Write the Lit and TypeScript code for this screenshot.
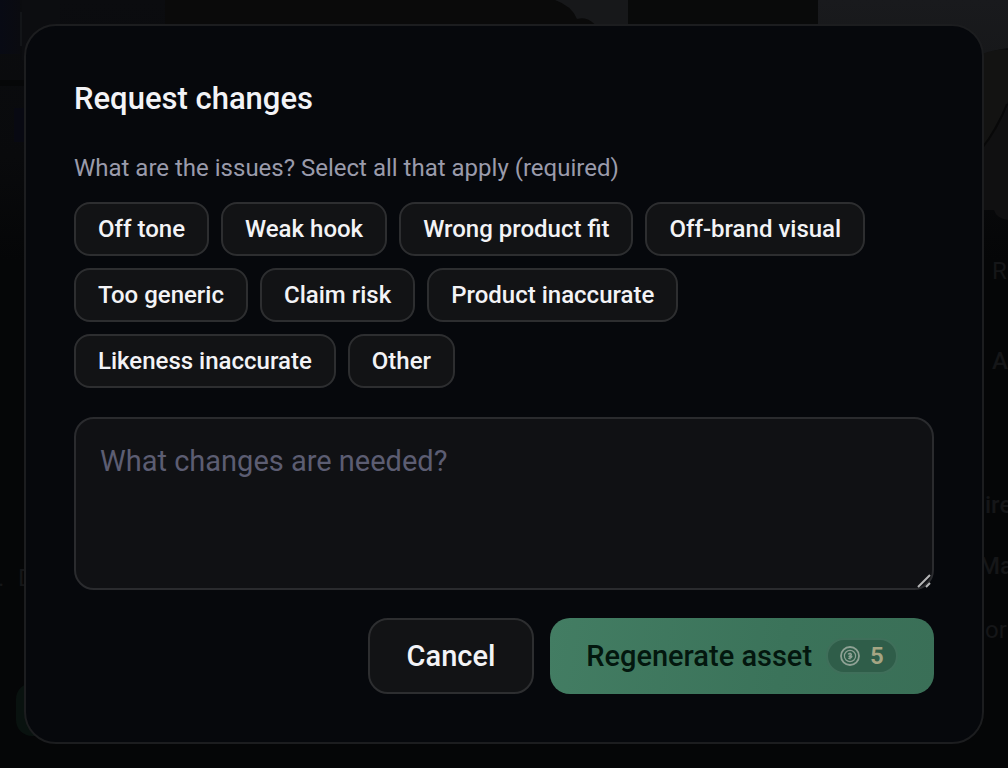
import { LitElement, html, css } from "lit";
import { customElement, state } from "lit/decorators.js";

const ISSUES = [
  "Off tone",
  "Weak hook",
  "Wrong product fit",
  "Off-brand visual",
  "Too generic",
  "Claim risk",
  "Product inaccurate",
  "Likeness inaccurate",
  "Other",
];

/** Dimmed page that shows around the edges of the dialog. */
@customElement("page-backdrop")
export class PageBackdrop extends LitElement {
  static styles = css`
    :host {
      display: block;
      background: #050607;
    }
    svg {
      display: block;
      width: 100%;
      height: 100%;
      font-family: Roboto, "Liberation Sans", sans-serif;
    }
  `;

  render() {
    return html`
      <svg viewBox="0 0 1008 768" preserveAspectRatio="xMidYMid slice" aria-hidden="true">
        <defs>
          <linearGradient id="left" x1="0" y1="0" x2="0" y2="1">
            <stop offset="0" stop-color="#0b0c0f" />
            <stop offset="0.6" stop-color="#090a0c" />
            <stop offset="1" stop-color="#050607" />
          </linearGradient>
          <linearGradient id="blue" x1="0" y1="0" x2="1" y2="0">
            <stop offset="0" stop-color="#080a14" />
            <stop offset="1" stop-color="#0a0b10" />
          </linearGradient>
          <linearGradient id="photo" x1="0" y1="0" x2="0" y2="1">
            <stop offset="0" stop-color="#191a1d" />
            <stop offset="1" stop-color="#17181a" />
          </linearGradient>
        </defs>
        <rect width="1008" height="260" fill="url(#left)" />
        <rect width="20" height="54" fill="url(#blue)" />
        <rect x="20" y="12" width="2" height="34" fill="#131518" />
        <rect x="22" width="38" height="60" fill="#0c0d10" />
        <rect y="80" width="30" height="6" fill="#060708" />
        <rect x="14" y="108" width="12" height="34" fill="#080912" />
        <rect x="165" width="463" height="60" fill="#0a0a0a" />
        <path d="M555 0H628V40H606Q592 14 577 19Q572 6 555 0Z" fill="#17181a" />
        <path d="M628 0h190v40H628z" fill="#090a0a" />
        <path d="M818 0h190v48q-16 2-26 8H818z" fill="url(#photo)" />
        <path d="M982 54q16-6 26-4v52q-14 28-26 46z" fill="#131312" />
        <path d="M982 148q14-18 26-44v116q-12-2-14-10h-12z" fill="#101011" />
        <path d="M1007 104q-10 26-25 44" fill="none" stroke="#080808" stroke-width="2" />
        <g fill="#151618" font-size="24">
          <text x="992" y="279">R</text>
          <text x="992" y="369" font-weight="500">A</text>
          <text x="985" y="513" font-weight="500">ire</text>
          <text x="979" y="574" font-weight="500">Ma</text>
          <text x="985" y="638">or</text>
          <text x="-2" y="586">.</text>
          <text x="18" y="586">D</text>
        </g>
        <rect x="16" y="683" width="120" height="53" rx="16" fill="#09120f" />
      </svg>
    `;
  }
}

@customElement("credit-badge")
export class CreditBadge extends LitElement {
  static properties = { amount: { type: Number } };
  declare amount: number;

  static styles = css`
    :host {
      display: inline-flex;
      align-items: center;
      gap: 10px;
      box-sizing: border-box;
      height: 36px;
      padding: 0 12px;
      border: 2px solid #3f6f5a;
      border-radius: 18px;
      background: #2f5d49;
      color: #a5a583;
      font-size: 24px;
      font-weight: 600;
      line-height: 32px;
    }
    svg {
      display: block;
      width: 20px;
      height: 20px;
    }
  `;

  render() {
    return html`
      <svg viewBox="0 0 20 20" fill="none" stroke="#8fa295" aria-hidden="true">
        <circle cx="10" cy="10" r="9" stroke-width="1.8" />
        <circle cx="10" cy="10" r="5.6" stroke-width="1.2" />
        <path
          d="M8 8.4Q9 7 10.8 7.5Q12.2 8.4 10.8 9.6L8.6 10.4H12Q11.6 12.6 8.2 12.4M10 6.4V13.4"
          stroke-width="1.1"
        />
      </svg>
      <span>${this.amount}</span>
    `;
  }
}

@customElement("app-root")
export class AppRoot extends LitElement {
  @state() private selected = new Set<string>();

  static styles = css`
    :host {
      display: grid;
      box-sizing: border-box;
      min-height: 100vh;
      padding: 24px;
      position: relative;
      align-items: center;
      font-family: Roboto, "Liberation Sans", sans-serif;
      color: #f3f3f6;
    }
    page-backdrop {
      position: absolute;
      inset: 0;
    }
    .dialog {
      position: relative;
      box-sizing: border-box;
      width: 100%;
      max-width: 1120px;
      margin: 0 auto;
      padding: 48px;
      border: 2px solid #1c1d1f;
      border-radius: 32px;
      background: #06080c;
    }
    h1 {
      margin: 0;
      font-size: 31px;
      font-weight: 500;
      line-height: 50px;
    }
    .issues {
      margin: 0;
      padding: 0;
      border: 0;
      min-width: 0;
    }
    .question {
      padding: 26px 0 16px;
      color: #9a9bab;
      font-size: 24px;
      line-height: 36px;
    }
    .chips {
      display: flex;
      flex-wrap: wrap;
      gap: 12px;
    }
    button {
      box-sizing: border-box;
      margin: 0;
      border: 2px solid #2d2e30;
      background: #121315;
      color: inherit;
      font-family: inherit;
      cursor: pointer;
    }
    .chip {
      padding: 9px 22px;
      border-radius: 16px;
      font-size: 24px;
      font-weight: 500;
      line-height: 32px;
    }
    .chip[aria-pressed="true"] {
      border-color: #40795f;
      background: #14241d;
    }
    .field {
      display: grid;
      position: relative;
      margin-top: 29px;
    }
    textarea {
      box-sizing: border-box;
      width: 100%;
      height: 173px;
      padding: 22px 24px;
      border: 2px solid #2a2b2e;
      border-radius: 20px;
      background: #101114;
      color: inherit;
      font-family: inherit;
      font-size: 29px;
      line-height: 40px;
      resize: vertical;
    }
    textarea::placeholder {
      color: #5c5d72;
      opacity: 1;
    }
    textarea::-webkit-resizer {
      background: transparent;
    }
    .grip {
      position: absolute;
      right: 3px;
      bottom: 2px;
      width: 14px;
      height: 14px;
      pointer-events: none;
    }
    .actions {
      display: flex;
      flex-wrap: wrap;
      justify-content: flex-end;
      gap: 16px;
      margin-top: 28px;
    }
    .action {
      display: flex;
      align-items: center;
      justify-content: center;
      gap: 16px;
      height: 76px;
      padding: 0 35px;
      border-radius: 20px;
      font-size: 29px;
      font-weight: 500;
      line-height: 40px;
    }
    .cancel {
      min-width: 166px;
    }
    .primary {
      gap: 14px;
      min-width: 384px;
      border: 0;
      background: linear-gradient(100deg, #437d63, #3b735a 60%, #3a6f57);
      color: #03170e;
    }
  `;

  private toggle(issue: string) {
    const next = new Set(this.selected);
    if (!next.delete(issue)) next.add(issue);
    this.selected = next;
  }

  render() {
    return html`
      <page-backdrop></page-backdrop>
      <section class="dialog" role="dialog" aria-modal="true" aria-labelledby="title">
        <h1 id="title">Request changes</h1>
        <fieldset class="issues">
          <legend class="question">What are the issues? Select all that apply (required)</legend>
          <div class="chips">
            ${ISSUES.map(
              (issue) => html`
                <button
                  class="chip"
                  type="button"
                  aria-pressed=${this.selected.has(issue) ? "true" : "false"}
                  @click=${() => this.toggle(issue)}
                >${issue}</button>
              `
            )}
          </div>
        </fieldset>
        <div class="field">
          <textarea aria-label="What changes are needed?" placeholder="What changes are needed?"></textarea>
          <svg class="grip" viewBox="0 0 14 14" fill="none" stroke="#b4b5b6" stroke-width="2" aria-hidden="true">
            <path d="M1 13L13 1M9 13L13 9" />
          </svg>
        </div>
        <div class="actions">
          <button class="action cancel" type="button">Cancel</button>
          <button class="action primary" type="button">
            <span>Regenerate asset</span>
            <credit-badge .amount=${5}></credit-badge>
          </button>
        </div>
      </section>
    `;
  }
}
